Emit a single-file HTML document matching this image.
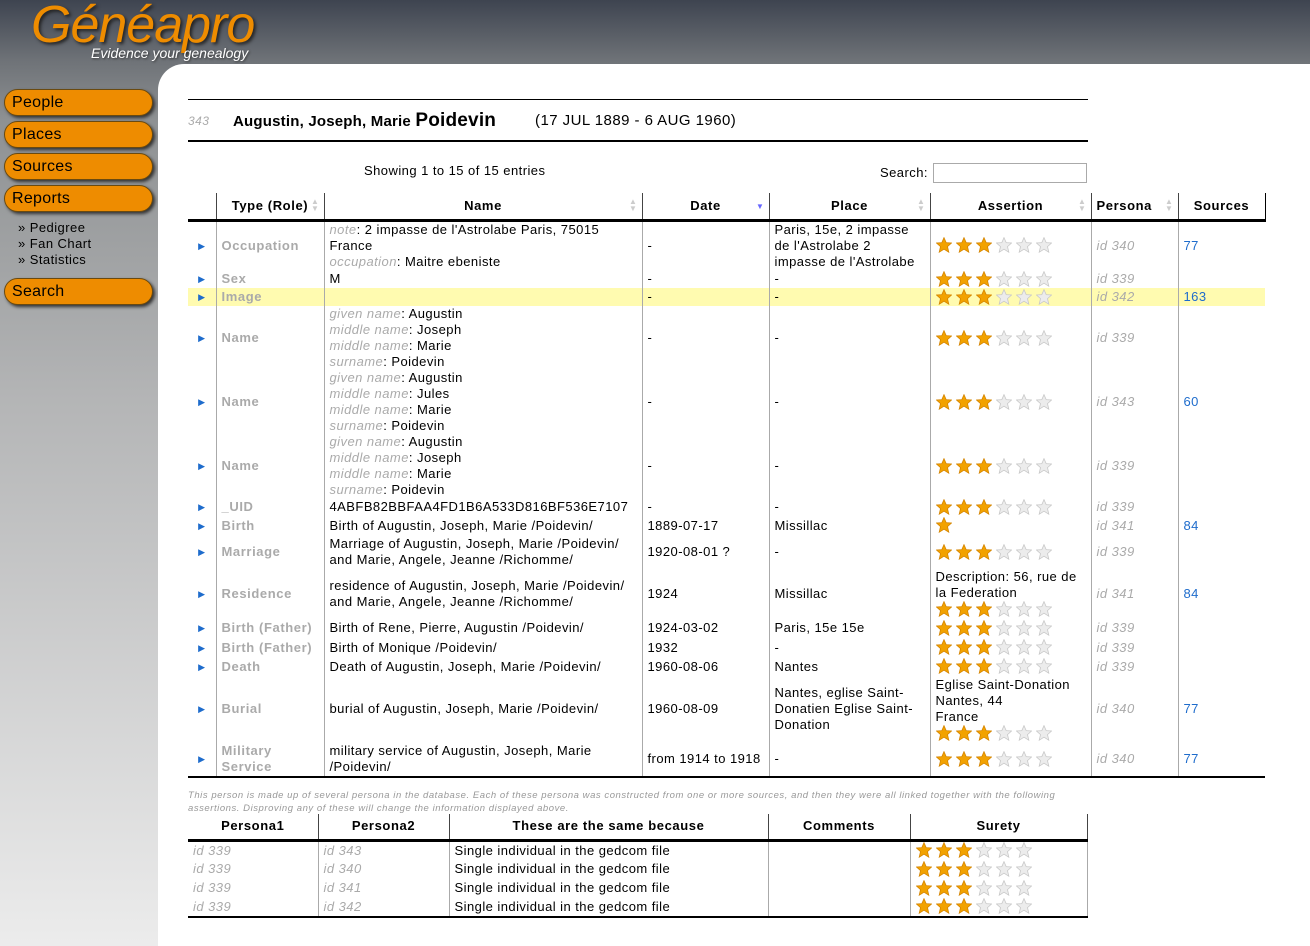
<!DOCTYPE html>
<html><head><meta charset="utf-8"><style>
*{margin:0;padding:0;box-sizing:border-box}
body{width:1310px;height:946px;overflow:hidden;font-family:"Liberation Sans",sans-serif;font-size:13px;letter-spacing:.45px;color:#000;background:linear-gradient(#3e4450 0,#6e7277 60px,#8e9193 120px,#b4b5b6 400px,#ececec 946px);position:relative}
.logo{position:absolute;left:31px;top:-5px;font-size:52px;font-style:italic;color:#ee8c00;text-shadow:2px 2px 3px #222;letter-spacing:-1px}
.tag{position:absolute;left:91px;top:45px;font-size:14px;font-style:italic;color:#fff;text-shadow:1px 1px 2px #333;letter-spacing:0}
.btn{position:absolute;left:4px;width:149px;height:27px;border-radius:14px;background:#ee8c00;border:1px solid #6a4a10;box-shadow:2px 2px 3px #333;font-size:16px;padding-left:7px;line-height:25px;color:#000;letter-spacing:.3px}
.sub{position:absolute;left:18px;top:220px;font-size:13px;line-height:16px;color:#000}
.panel{position:absolute;left:158px;top:64px;width:1152px;height:882px;background:#fff;border-top-left-radius:26px}
.abs{position:absolute}
table{border-collapse:collapse;table-layout:fixed}
td,th{padding:0 5px;line-height:16px;vertical-align:middle;text-align:left;overflow:hidden;white-space:nowrap}
th{font-weight:bold;text-align:center;letter-spacing:.6px;border-bottom:3px solid #000;position:relative}
.m td{border-left:1px solid #aaa}
.m td:first-child{border-left:none;text-align:center;color:#1e6ccc;font-size:9px;padding:0}
.m th{border-left:1px solid #444}
.m th:first-child{border-left:none}
.m tr:last-child td{border-bottom:2px solid #000}
.t{color:#aaa;font-weight:bold;letter-spacing:.6px}
i,.g{color:#aaa;font-style:italic}
.id{color:#aaa;font-style:italic}
a{color:#1e6ccc;text-decoration:none}
svg.st{display:block;margin:0 0 1px}
.o{fill:#f2a200;stroke:#d48400;stroke-width:.8}
.e{fill:#ececec;stroke:#c8c8c8;stroke-width:.8}
.hl td{background:#fffbb0}
.ar{position:absolute;right:4px;top:5px;color:#ccc;font-size:8px;line-height:7px;font-weight:normal}
.p td{border-left:1px solid #aaa;height:19px;line-height:18px}
.p td:first-child{border-left:none}
.p th{border-left:1px solid #444;height:26px}
.p th:first-child{border-left:none}
.p tr:last-child td{border-bottom:2px solid #000}
</style></head><body>
<svg width="0" height="0" style="position:absolute"><defs><symbol id="s" viewBox="0 0 16 16"><polygon points="8,0.6 10.2,5.6 15.6,6 11.5,9.6 12.8,15.2 8,12.2 3.2,15.2 4.5,9.6 0.4,6 5.8,5.6"/></symbol></defs></svg>
<div class="logo">Généapro</div>
<div class="tag">Evidence your genealogy</div>
<div class="btn" style="top:89px">People</div>
<div class="btn" style="top:121px">Places</div>
<div class="btn" style="top:153px">Sources</div>
<div class="btn" style="top:185px">Reports</div>
<div class="sub">» Pedigree<br>» Fan Chart<br>» Statistics</div>
<div class="btn" style="top:278px">Search</div>
<div class="panel"></div>

<div class="abs" style="left:188px;top:99px;width:900px;border-top:1px solid #000"></div>
<div class="abs" style="left:188px;top:114px;font-size:12px;color:#aaa;font-style:italic">343</div>
<div class="abs" style="left:233px;top:110px;font-size:15px;font-weight:bold;letter-spacing:.2px">Augustin, Joseph, Marie <span style="font-size:19px">Poidevin</span></div>
<div class="abs" style="left:535px;top:112px;font-size:15px">(17 JUL 1889 - 6 AUG 1960)</div>
<div class="abs" style="left:188px;top:140px;width:900px;border-top:2px solid #000"></div>
<div class="abs" style="left:364px;top:163px">Showing 1 to 15 of 15 entries</div>
<div class="abs" style="left:880px;top:165px">Search:</div>
<div class="abs" style="left:933px;top:163px;width:154px;height:20px;border:1px solid #aaa"></div>

<table class="m abs" style="left:188px;top:193px;width:1077px">
<colgroup><col style="width:28px"><col style="width:108px"><col style="width:318px"><col style="width:127px"><col style="width:161px"><col style="width:161px"><col style="width:87px"><col style="width:87px"></colgroup>
<tr style="height:27px"><th></th><th>Type (Role)<span class="ar">▲<br>▼</span></th><th>Name<span class="ar">▲<br>▼</span></th><th>Date<span class="ar" style="color:#66f;top:10px">▼</span></th><th>Place<span class="ar">▲<br>▼</span></th><th>Assertion<span class="ar">▲<br>▼</span></th><th style="text-align:left">Persona<span class="ar">▲<br>▼</span></th><th style="border-right:1px solid #000">Sources</th></tr>
<tr style="height:50px"><td>▶</td><td class="t">Occupation</td><td><i>note</i>: 2 impasse de l'Astrolabe Paris, 75015<br>France<br><i>occupation</i>: Maitre ebeniste</td><td>-</td><td>Paris, 15e, 2 impasse<br>de l'Astrolabe 2<br>impasse de l'Astrolabe</td><td><svg class="st" width="118" height="16"><use href="#s" x="0" width="16" height="16" class="o"/><use href="#s" x="20" width="16" height="16" class="o"/><use href="#s" x="40" width="16" height="16" class="o"/><use href="#s" x="60" width="16" height="16" class="e"/><use href="#s" x="80" width="16" height="16" class="e"/><use href="#s" x="100" width="16" height="16" class="e"/></svg></td><td class="id">id 340</td><td><a>77</a></td></tr>
<tr style="height:18px"><td>▶</td><td class="t">Sex</td><td>M</td><td>-</td><td>-</td><td><svg class="st" width="118" height="16"><use href="#s" x="0" width="16" height="16" class="o"/><use href="#s" x="20" width="16" height="16" class="o"/><use href="#s" x="40" width="16" height="16" class="o"/><use href="#s" x="60" width="16" height="16" class="e"/><use href="#s" x="80" width="16" height="16" class="e"/><use href="#s" x="100" width="16" height="16" class="e"/></svg></td><td class="id">id 339</td><td></td></tr>
<tr class="hl" style="height:18px"><td>▶</td><td class="t">Image</td><td></td><td>-</td><td>-</td><td><svg class="st" width="118" height="16"><use href="#s" x="0" width="16" height="16" class="o"/><use href="#s" x="20" width="16" height="16" class="o"/><use href="#s" x="40" width="16" height="16" class="o"/><use href="#s" x="60" width="16" height="16" class="e"/><use href="#s" x="80" width="16" height="16" class="e"/><use href="#s" x="100" width="16" height="16" class="e"/></svg></td><td class="id">id 342</td><td><a>163</a></td></tr>
<tr style="height:64px"><td>▶</td><td class="t">Name</td><td><i>given name</i>: Augustin<br><i>middle name</i>: Joseph<br><i>middle name</i>: Marie<br><i>surname</i>: Poidevin</td><td>-</td><td>-</td><td><svg class="st" width="118" height="16"><use href="#s" x="0" width="16" height="16" class="o"/><use href="#s" x="20" width="16" height="16" class="o"/><use href="#s" x="40" width="16" height="16" class="o"/><use href="#s" x="60" width="16" height="16" class="e"/><use href="#s" x="80" width="16" height="16" class="e"/><use href="#s" x="100" width="16" height="16" class="e"/></svg></td><td class="id">id 339</td><td></td></tr>
<tr style="height:64px"><td>▶</td><td class="t">Name</td><td><i>given name</i>: Augustin<br><i>middle name</i>: Jules<br><i>middle name</i>: Marie<br><i>surname</i>: Poidevin</td><td>-</td><td>-</td><td><svg class="st" width="118" height="16"><use href="#s" x="0" width="16" height="16" class="o"/><use href="#s" x="20" width="16" height="16" class="o"/><use href="#s" x="40" width="16" height="16" class="o"/><use href="#s" x="60" width="16" height="16" class="e"/><use href="#s" x="80" width="16" height="16" class="e"/><use href="#s" x="100" width="16" height="16" class="e"/></svg></td><td class="id">id 343</td><td><a>60</a></td></tr>
<tr style="height:64px"><td>▶</td><td class="t">Name</td><td><i>given name</i>: Augustin<br><i>middle name</i>: Joseph<br><i>middle name</i>: Marie<br><i>surname</i>: Poidevin</td><td>-</td><td>-</td><td><svg class="st" width="118" height="16"><use href="#s" x="0" width="16" height="16" class="o"/><use href="#s" x="20" width="16" height="16" class="o"/><use href="#s" x="40" width="16" height="16" class="o"/><use href="#s" x="60" width="16" height="16" class="e"/><use href="#s" x="80" width="16" height="16" class="e"/><use href="#s" x="100" width="16" height="16" class="e"/></svg></td><td class="id">id 339</td><td></td></tr>
<tr style="height:18px"><td>▶</td><td class="t">_UID</td><td>4ABFB82BBFAA4FD1B6A533D816BF536E7107</td><td>-</td><td>-</td><td><svg class="st" width="118" height="16"><use href="#s" x="0" width="16" height="16" class="o"/><use href="#s" x="20" width="16" height="16" class="o"/><use href="#s" x="40" width="16" height="16" class="o"/><use href="#s" x="60" width="16" height="16" class="e"/><use href="#s" x="80" width="16" height="16" class="e"/><use href="#s" x="100" width="16" height="16" class="e"/></svg></td><td class="id">id 339</td><td></td></tr>
<tr style="height:19px"><td>▶</td><td class="t">Birth</td><td>Birth of Augustin, Joseph, Marie /Poidevin/</td><td>1889-07-17</td><td>Missillac</td><td><svg class="st" width="118" height="16"><use href="#s" x="0" width="16" height="16" class="o"/></svg></td><td class="id">id 341</td><td><a>84</a></td></tr>
<tr style="height:34px"><td>▶</td><td class="t">Marriage</td><td>Marriage of Augustin, Joseph, Marie /Poidevin/<br>and Marie, Angele, Jeanne /Richomme/</td><td>1920-08-01 ?</td><td>-</td><td><svg class="st" width="118" height="16"><use href="#s" x="0" width="16" height="16" class="o"/><use href="#s" x="20" width="16" height="16" class="o"/><use href="#s" x="40" width="16" height="16" class="o"/><use href="#s" x="60" width="16" height="16" class="e"/><use href="#s" x="80" width="16" height="16" class="e"/><use href="#s" x="100" width="16" height="16" class="e"/></svg></td><td class="id">id 339</td><td></td></tr>
<tr style="height:48px"><td>▶</td><td class="t">Residence</td><td>residence of Augustin, Joseph, Marie /Poidevin/<br>and Marie, Angele, Jeanne /Richomme/</td><td>1924</td><td>Missillac</td><td>Description: 56, rue de<br>la Federation<svg class="st" width="118" height="16"><use href="#s" x="0" width="16" height="16" class="o"/><use href="#s" x="20" width="16" height="16" class="o"/><use href="#s" x="40" width="16" height="16" class="o"/><use href="#s" x="60" width="16" height="16" class="e"/><use href="#s" x="80" width="16" height="16" class="e"/><use href="#s" x="100" width="16" height="16" class="e"/></svg></td><td class="id">id 341</td><td><a>84</a></td></tr>
<tr style="height:20px"><td>▶</td><td class="t">Birth (Father)</td><td>Birth of Rene, Pierre, Augustin /Poidevin/</td><td>1924-03-02</td><td>Paris, 15e 15e</td><td><svg class="st" width="118" height="16"><use href="#s" x="0" width="16" height="16" class="o"/><use href="#s" x="20" width="16" height="16" class="o"/><use href="#s" x="40" width="16" height="16" class="o"/><use href="#s" x="60" width="16" height="16" class="e"/><use href="#s" x="80" width="16" height="16" class="e"/><use href="#s" x="100" width="16" height="16" class="e"/></svg></td><td class="id">id 339</td><td></td></tr>
<tr style="height:19px"><td>▶</td><td class="t">Birth (Father)</td><td>Birth of Monique /Poidevin/</td><td>1932</td><td>-</td><td><svg class="st" width="118" height="16"><use href="#s" x="0" width="16" height="16" class="o"/><use href="#s" x="20" width="16" height="16" class="o"/><use href="#s" x="40" width="16" height="16" class="o"/><use href="#s" x="60" width="16" height="16" class="e"/><use href="#s" x="80" width="16" height="16" class="e"/><use href="#s" x="100" width="16" height="16" class="e"/></svg></td><td class="id">id 339</td><td></td></tr>
<tr style="height:19px"><td>▶</td><td class="t">Death</td><td>Death of Augustin, Joseph, Marie /Poidevin/</td><td>1960-08-06</td><td>Nantes</td><td><svg class="st" width="118" height="16"><use href="#s" x="0" width="16" height="16" class="o"/><use href="#s" x="20" width="16" height="16" class="o"/><use href="#s" x="40" width="16" height="16" class="o"/><use href="#s" x="60" width="16" height="16" class="e"/><use href="#s" x="80" width="16" height="16" class="e"/><use href="#s" x="100" width="16" height="16" class="e"/></svg></td><td class="id">id 339</td><td></td></tr>
<tr style="height:66px"><td>▶</td><td class="t">Burial</td><td>burial of Augustin, Joseph, Marie /Poidevin/</td><td>1960-08-09</td><td>Nantes, eglise Saint-<br>Donatien Eglise Saint-<br>Donation</td><td>Eglise Saint-Donation<br>Nantes, 44<br>France<svg class="st" width="118" height="16"><use href="#s" x="0" width="16" height="16" class="o"/><use href="#s" x="20" width="16" height="16" class="o"/><use href="#s" x="40" width="16" height="16" class="o"/><use href="#s" x="60" width="16" height="16" class="e"/><use href="#s" x="80" width="16" height="16" class="e"/><use href="#s" x="100" width="16" height="16" class="e"/></svg></td><td class="id">id 340</td><td><a>77</a></td></tr>
<tr style="height:35px"><td>▶</td><td class="t">Military<br>Service</td><td>military service of Augustin, Joseph, Marie<br>/Poidevin/</td><td>from 1914 to 1918</td><td>-</td><td><svg class="st" width="118" height="16"><use href="#s" x="0" width="16" height="16" class="o"/><use href="#s" x="20" width="16" height="16" class="o"/><use href="#s" x="40" width="16" height="16" class="o"/><use href="#s" x="60" width="16" height="16" class="e"/><use href="#s" x="80" width="16" height="16" class="e"/><use href="#s" x="100" width="16" height="16" class="e"/></svg></td><td class="id">id 340</td><td><a>77</a></td></tr>
</table>

<div class="abs" style="left:188px;top:789px;font-size:9.5px;line-height:13px;color:#999;font-style:italic;width:875px;letter-spacing:.55px">This person is made up of several persona in the database. Each of these persona was constructed from one or more sources, and then they were all linked together with the following assertions. Disproving any of these will change the information displayed above.</div>

<table class="p abs" style="left:188px;top:814px;width:899px">
<colgroup><col style="width:130px"><col style="width:131px"><col style="width:319px"><col style="width:142px"><col style="width:177px"></colgroup>
<tr><th>Persona1</th><th>Persona2</th><th>These are the same because</th><th>Comments</th><th style="border-right:1px solid #444">Surety</th></tr>
<tr><td class="id">id 339</td><td class="id">id 343</td><td>Single individual in the gedcom file</td><td></td><td style="border-right:1px solid #aaa"><svg class="st" width="118" height="16"><use href="#s" x="0" width="16" height="16" class="o"/><use href="#s" x="20" width="16" height="16" class="o"/><use href="#s" x="40" width="16" height="16" class="o"/><use href="#s" x="60" width="16" height="16" class="e"/><use href="#s" x="80" width="16" height="16" class="e"/><use href="#s" x="100" width="16" height="16" class="e"/></svg></td></tr>
<tr><td class="id">id 339</td><td class="id">id 340</td><td>Single individual in the gedcom file</td><td></td><td style="border-right:1px solid #aaa"><svg class="st" width="118" height="16"><use href="#s" x="0" width="16" height="16" class="o"/><use href="#s" x="20" width="16" height="16" class="o"/><use href="#s" x="40" width="16" height="16" class="o"/><use href="#s" x="60" width="16" height="16" class="e"/><use href="#s" x="80" width="16" height="16" class="e"/><use href="#s" x="100" width="16" height="16" class="e"/></svg></td></tr>
<tr><td class="id">id 339</td><td class="id">id 341</td><td>Single individual in the gedcom file</td><td></td><td style="border-right:1px solid #aaa"><svg class="st" width="118" height="16"><use href="#s" x="0" width="16" height="16" class="o"/><use href="#s" x="20" width="16" height="16" class="o"/><use href="#s" x="40" width="16" height="16" class="o"/><use href="#s" x="60" width="16" height="16" class="e"/><use href="#s" x="80" width="16" height="16" class="e"/><use href="#s" x="100" width="16" height="16" class="e"/></svg></td></tr>
<tr><td class="id">id 339</td><td class="id">id 342</td><td>Single individual in the gedcom file</td><td></td><td style="border-right:1px solid #aaa"><svg class="st" width="118" height="16"><use href="#s" x="0" width="16" height="16" class="o"/><use href="#s" x="20" width="16" height="16" class="o"/><use href="#s" x="40" width="16" height="16" class="o"/><use href="#s" x="60" width="16" height="16" class="e"/><use href="#s" x="80" width="16" height="16" class="e"/><use href="#s" x="100" width="16" height="16" class="e"/></svg></td></tr>
</table>
</body></html>
